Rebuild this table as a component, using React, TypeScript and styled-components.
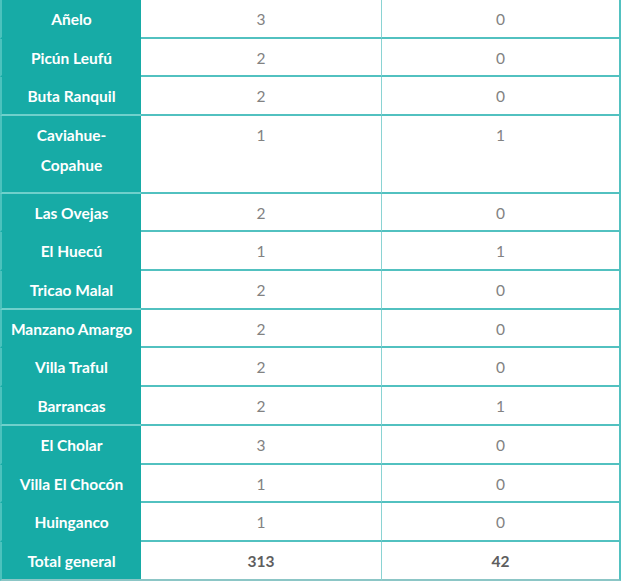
import * as React from 'react';
import styled, { createGlobalStyle } from 'styled-components';

const TEAL = '#17aba6';
const LINE = '#52c1c0';

const GlobalStyle = createGlobalStyle`
  html, body {
    margin: 0;
    padding: 0;
    background: #ffffff;
  }
`;

const Table = styled.div`
  width: 623px;
  display: flex;
  flex-direction: column;
  font-family: Lato, 'Open Sans', sans-serif;
  font-size: 15.5px;
`;

const Row = styled.div<{ $units: number }>`
  display: grid;
  grid-template-columns: 141px 240px 240px;
  height: ${(p) => p.$units * 38.73}px;
  box-sizing: border-box;
`;

const NameCell = styled.div<{ $strong: boolean }>`
  background: ${TEAL};
  color: #ffffff;
  font-weight: 700;
  text-align: center;
  line-height: 30px;
  padding-top: 4px;
  white-space: nowrap;
  box-sizing: border-box;
  border-left: 2px solid #4cc2bd;
  border-bottom: 2px solid ${(p) => (p.$strong ? '#6fd0cb' : TEAL)};
`;

const ValueCell = styled.div<{ $last?: boolean; $bold?: boolean }>`
  color: ${(p) => (p.$bold ? '#5e5e5e' : '#828282')};
  font-weight: ${(p) => (p.$bold ? 700 : 400)};
  text-align: center;
  line-height: 30px;
  padding-top: 4px;
  box-sizing: border-box;
  border-bottom: 2px solid ${LINE};
  border-left: ${(p) => (p.$last ? '1px solid #8ad3d3' : 'none')};
  border-right: ${(p) => (p.$last ? `2px solid ${LINE}` : 'none')};
`;

const TotalRow = styled(Row)`
  & > div {
    border-bottom-color: #8cc6c6;
  }
`;

interface Entry {
  name: React.ReactNode;
  a: number;
  b: number;
  units?: number;
  strong?: boolean;
}

const rows: Entry[] = [
  { name: 'Añelo', a: 3, b: 0 },
  { name: 'Picún Leufú', a: 2, b: 0 },
  { name: 'Buta Ranquil', a: 2, b: 0, strong: true },
  {
    name: (
      <>
        Caviahue-
        <br />
        Copahue
      </>
    ),
    a: 1,
    b: 1,
    units: 2,
    strong: true,
  },
  { name: 'Las Ovejas', a: 2, b: 0 },
  { name: 'El Huecú', a: 1, b: 1 },
  { name: 'Tricao Malal', a: 2, b: 0, strong: true },
  { name: 'Manzano Amargo', a: 2, b: 0 },
  { name: 'Villa Traful', a: 2, b: 0 },
  { name: 'Barrancas', a: 2, b: 1, strong: true },
  { name: 'El Cholar', a: 3, b: 0 },
  { name: 'Villa El Chocón', a: 1, b: 0 },
  { name: 'Huinganco', a: 1, b: 0 },
];

const App: React.FC = () => {
  return (
    <>
      <GlobalStyle />
      <Table>
        {rows.map((r, i) => (
          <Row key={i} $units={r.units ?? 1}>
            <NameCell $strong={!!r.strong}>{r.name}</NameCell>
            <ValueCell>{r.a}</ValueCell>
            <ValueCell $last>{r.b}</ValueCell>
          </Row>
        ))}
        <TotalRow $units={1}>
          <NameCell $strong>Total general</NameCell>
          <ValueCell $bold>313</ValueCell>
          <ValueCell $last $bold>
            42
          </ValueCell>
        </TotalRow>
      </Table>
    </>
  );
};

export default App;
